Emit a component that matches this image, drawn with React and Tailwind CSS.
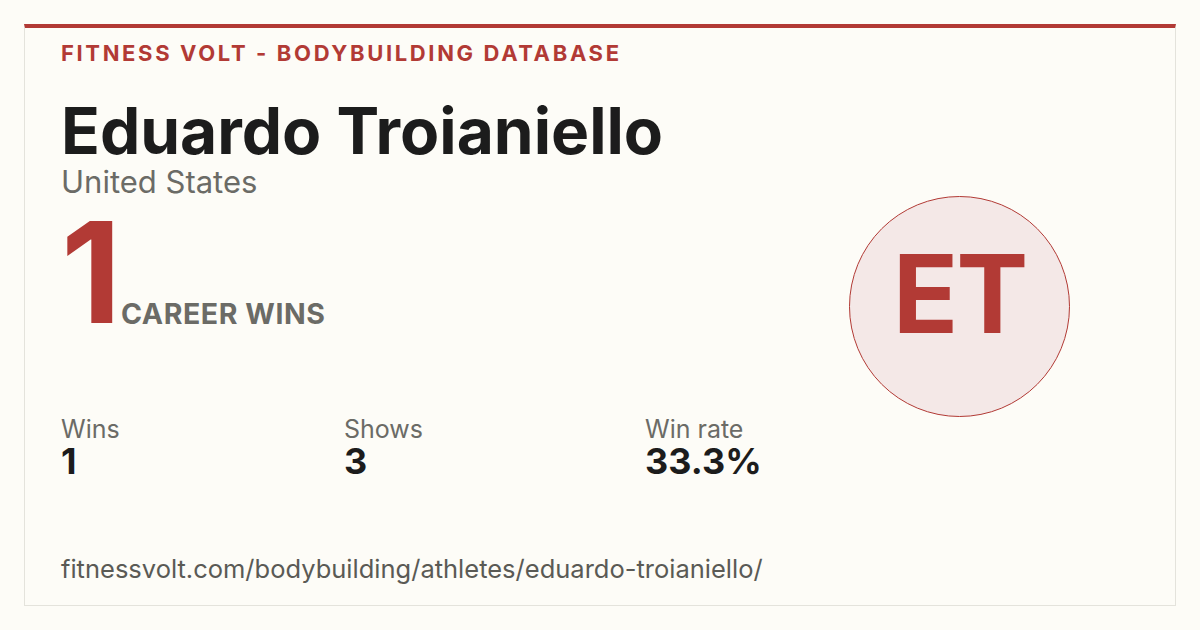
import React from 'react';

const stats = [
  { label: 'Wins', value: '1', width: 'w-[283px]' },
  { label: 'Shows', value: '3', width: 'w-[301px]' },
  { label: 'Win rate', value: '33.3%', width: 'w-[200px]' },
];

const App = () => {
  return (
    <div className="w-[1200px] h-[630px] bg-[#fdfcf7] p-6 font-['Inter',sans-serif]">
      <div className="h-full bg-[#fdfcf7] border border-[#e4e3dc] border-t-4 border-t-[#b23a35] flex">
        <div className="flex-1 min-w-0 flex flex-col pl-[36px] pt-[10px]">
          <p className="text-[22px] leading-[30px] font-bold tracking-[0.12em] text-[#b23a35]">
            FITNESS VOLT - BODYBUILDING DATABASE
          </p>
          <h1 className="mt-[29px] text-[64px] leading-[67px] font-bold text-[#1c1c1c]">
            Eduardo Troianiello
          </h1>
          <p className="text-[31px] leading-[36px] text-[#6b6b66]">United States</p>
          <div className="flex items-end mt-[16px]">
            <span className="text-[140px] leading-[112px] font-bold text-[#b23a35] tracking-[-0.06em]">
              1
            </span>
            <span className="ml-[8px] mb-[-1px] text-[28.5px] leading-[30px] font-bold tracking-[0.02em] text-[#6b6b66]">
              CAREER WINS
            </span>
          </div>
          <div className="flex mt-[87px]">
            {stats.map((s) => (
              <div key={s.label} className={s.width + ' flex flex-col'}>
                <span className="text-[25px] leading-[28px] text-[#6b6b66]">{s.label}</span>
                <span className="text-[36px] leading-[36px] font-bold text-[#1c1c1c]">{s.value}</span>
              </div>
            ))}
          </div>
          <p className="mt-[75px] text-[25.5px] leading-[30px] text-[#5a5a55]">
            fitnessvolt.com/bodybuilding/athletes/eduardo-troianiello/
          </p>
        </div>
        <div className="shrink-0 flex justify-end items-start pt-[168px] pr-[105px]">
          <div className="w-[221px] h-[221px] rounded-full bg-[#f4e8e7] border-[1.5px] border-[#b23a35] flex items-center justify-center pb-[26px]">
            <span className="text-[108px] leading-none font-bold text-[#b23a35] tracking-[-0.02em]">ET</span>
          </div>
        </div>
      </div>
    </div>
  );
};

export default App;
